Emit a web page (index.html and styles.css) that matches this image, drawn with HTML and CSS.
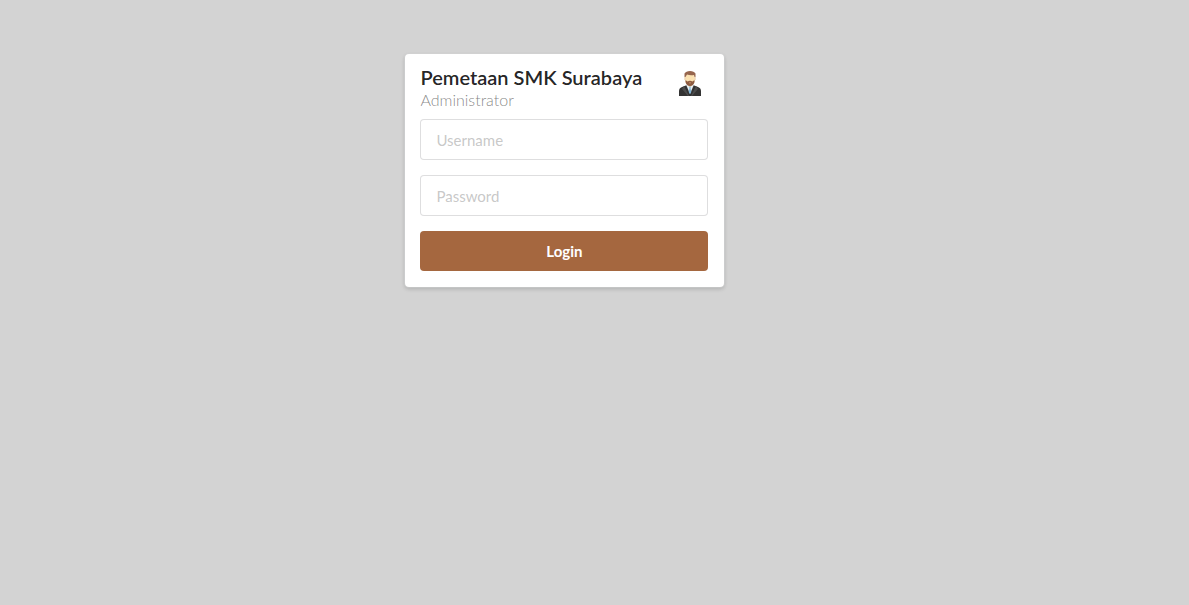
FILE: index.html
```
<!DOCTYPE html>
<html lang="id">
<head>
<meta charset="utf-8">
<meta name="viewport" content="width=device-width, initial-scale=1">
<title>Pemetaan SMK Surabaya</title>
<link rel="stylesheet" href="styles.css">
</head>
<body>
<main class="page">
  <section class="card">
    <header class="card-header">
      <div>
        <h1 class="title">Pemetaan SMK Surabaya</h1>
        <p class="meta">Administrator</p>
      </div>
      <svg class="avatar" viewBox="0 0 36 36" aria-hidden="true">
        <path fill="#333" d="M7 31v-5q0-3 3-4l5-2h6l5 2q3 1 3 4v5z"/>
        <path fill="#4c4c4c" d="M12 21l5 10h2l5-10 2 3-6 7h-4l-6-7z"/>
        <path fill="#e9f0f4" d="M14 19.500l4 9.500 4-9.500-4-1z"/>
        <path fill="#7fb5d6" d="M17 21h2l-.5 2 .8 4-1.300 2-1.300-2 .8-4z"/>
        <path fill="#f2d3a4" d="M15.500 17h5v3L18 22l-2.500-2z"/>
        <path fill="#fbe2b2" d="M13.500 9h9v8q-1 3-4.500 3t-4.500-3z"/>
        <path fill="#e8c493" d="M12.500 12h1v3h-1zM22.500 12h1v3h-1z"/>
        <path fill="#8e5c41" d="M13.500 15l2 1.500q2.500-1.500 5 0l2-1.500v2q-1 4-4.500 4t-4.500-4z"/>
        <path fill="#cf9a78" d="M17 17.500h2v.8h-2z"/>
        <path fill="#96654d" d="M12.500 12V8.500Q14 6 18 6t5.500 2.500V12h-1l-.5-2q-4 .6-7-.5L13.500 12z"/>
      </svg>
    </header>
    <form class="form">
      <input class="field" type="text" name="username" placeholder="Username" aria-label="Username">
      <input class="field" type="password" name="password" placeholder="Password" aria-label="Password">
      <button class="submit" type="submit">Login</button>
    </form>
  </section>
</main>
</body>
</html>
```
FILE: styles.css
```
* {
  box-sizing: border-box;
}

body {
  margin: 0;
  min-height: 100vh;
  background: #d3d3d3;
  color: rgba(0, 0, 0, 0.87);
  font-family: Lato, "Liberation Sans", sans-serif;
  font-size: 15px;
}

.page {
  padding: 54px 16px 16px 34.1%;
}

.card {
  width: 100%;
  max-width: 319px;
  padding: 11px 16px 16px 15px;
  border-radius: 4px;
  background: #fff;
  box-shadow: 0 1px 3px 0 #bcbdbd, 0 0 0 1px #d4d4d5, 0 2px 4px rgba(0, 0, 0, 0.16);
}

.card-header {
  display: flex;
  justify-content: space-between;
}

.title {
  margin: 0;
  font-size: 20px;
  font-weight: 600;
  line-height: 24px;
}

.meta {
  margin: 0;
  color: rgba(0, 0, 0, 0.5);
  font-size: 16px;
  font-weight: 300;
  line-height: 22px;
}

.avatar {
  width: 36px;
  height: 36px;
}

.form {
  display: grid;
  gap: 15px;
  margin-top: 8px;
}

.field {
  width: 100%;
  height: 41px;
  padding: 0 15px;
  border: 1px solid rgba(34, 36, 38, 0.15);
  border-radius: 4px;
  background: #fff;
  color: inherit;
  font: inherit;
}

.field::placeholder {
  color: rgba(191, 191, 191, 0.87);
}

.submit {
  height: 40px;
  padding: 0 15px;
  border: 0;
  border-radius: 4px;
  background: #a5673f;
  color: #fff;
  font: inherit;
  font-weight: 700;
  cursor: pointer;
}
```
